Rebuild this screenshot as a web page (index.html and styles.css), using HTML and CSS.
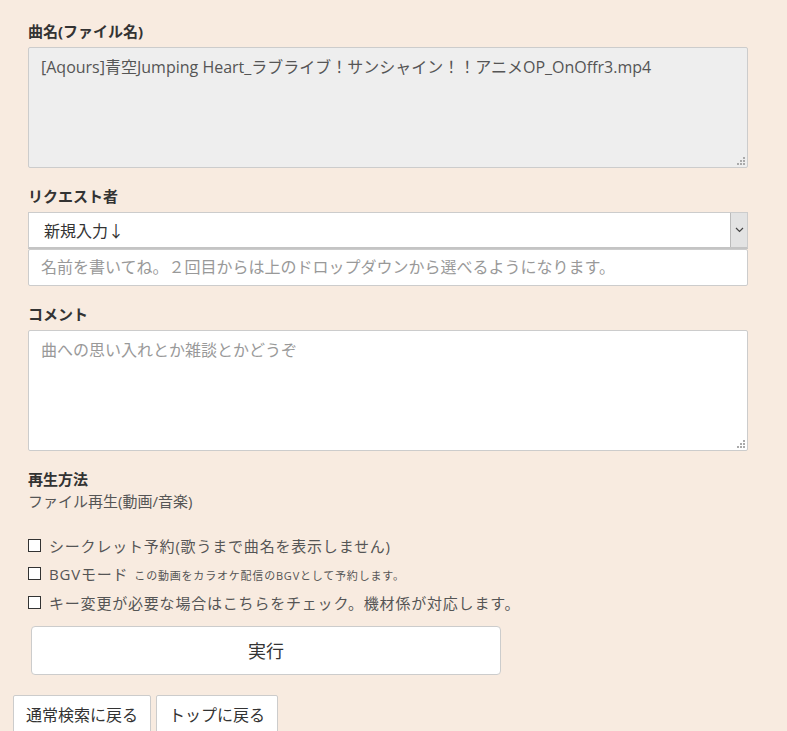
FILE: index.html
```html
<!DOCTYPE html>
<html lang="ja">
<head>
    <meta charset="UTF-8">
    <meta name="viewport" content="width=device-width, initial-scale=1.0">
    <title>リクエスト</title>
    <link rel="stylesheet" href="styles.css">
</head>
<body>
    <div class="page">
        <form class="request-form">
            <div class="group">
                <div class="label">曲名(ファイル名)</div>
                <div class="textbox readonly">[Aqours]青空Jumping Heart_ラブライブ！サンシャイン！！アニメOP_OnOffr3.mp4
                    <svg class="grip" width="9" height="9" viewBox="0 0 9 9"><g fill="#aaa"><rect x="7" y="1" width="2" height="2"/><rect x="4" y="4" width="2" height="2"/><rect x="7" y="4" width="2" height="2"/><rect x="1" y="7" width="2" height="2"/><rect x="4" y="7" width="2" height="2"/><rect x="7" y="7" width="2" height="2"/></g></svg>
                </div>
            </div>

            <div class="group">
                <div class="label">リクエスト者</div>
                <div class="select">
                    <span class="select-text">新規入力↓</span>
                    <span class="select-arrow">
                        <svg width="9" height="6" viewBox="0 0 9 6"><path d="M1 1 L4.5 4.5 L8 1" fill="none" stroke="#444" stroke-width="1.2"/></svg>
                    </span>
                </div>
                <div class="input placeholder">名前を書いてね。２回目からは上のドロップダウンから選べるようになります。</div>
            </div>

            <div class="group">
                <div class="label">コメント</div>
                <div class="textbox placeholder">曲への思い入れとか雑談とかどうぞ
                    <svg class="grip" width="9" height="9" viewBox="0 0 9 9"><g fill="#aaa"><rect x="7" y="1" width="2" height="2"/><rect x="4" y="4" width="2" height="2"/><rect x="7" y="4" width="2" height="2"/><rect x="1" y="7" width="2" height="2"/><rect x="4" y="7" width="2" height="2"/><rect x="7" y="7" width="2" height="2"/></g></svg>
                </div>
            </div>

            <div class="play-method">
                <div class="label">再生方法</div>
                <div class="plain">ファイル再生(動画/音楽)</div>
            </div>

            <div class="checks">
                <label class="check"><input type="checkbox"> シークレット予約(歌うまで曲名を表示しません)</label>
                <label class="check"><input type="checkbox"> BGVモード <small>この動画をカラオケ配信のBGVとして予約します。</small></label>
                <label class="check"><input type="checkbox"> キー変更が必要な場合はこちらをチェック。機材係が対応します。</label>
            </div>

            <button type="button" class="submit">実行</button>
        </form>

        <div class="nav-buttons">
            <button type="button" class="nav">通常検索に戻る</button>
            <button type="button" class="nav">トップに戻る</button>
        </div>
    </div>
</body>
</html>
```

FILE: styles.css
```css
body {
    background-color: #f8ebe0;
    color: #555;
    font-family: "Open Sans", "Noto Sans CJK JP", sans-serif;
    margin: 0;
}
.page {
    padding: 21px 13px 0;
}
.request-form {
    width: 720px;
    margin: 0 15px;
}
.group {
    margin-bottom: 18px;
}
.label {
    color: #333;
    font-size: 15px;
    font-weight: bold;
    line-height: 20px;
    margin-bottom: 6px;
}
.textbox {
    position: relative;
    box-sizing: border-box;
    height: 121px;
    background: white;
    border: 1px solid #ccc;
    border-radius: 2px;
    padding: 8px 12px;
    font-size: 16px;
    line-height: 22px;
    white-space: nowrap;
}
.textbox.readonly {
    background: #eee;
}
.grip {
    position: absolute;
    right: 2px;
    bottom: 2px;
}
.placeholder {
    color: #999;
}
.select {
    box-sizing: border-box;
    height: 37px;
    display: flex;
    align-items: stretch;
    background: white;
    border: 1px solid #ccc;
    border-bottom: 2px solid #c4c4c4;
}
.select-text {
    flex: 1;
    display: flex;
    align-items: center;
    padding-left: 15px;
    color: #333;
    font-size: 16px;
}
.select-arrow {
    width: 16px;
    display: flex;
    align-items: center;
    justify-content: center;
    background: #e3e3e3;
    border-left: 1px solid #bbb;
}
.input {
    box-sizing: border-box;
    height: 37px;
    background: white;
    border: 1px solid #ccc;
    border-radius: 2px;
    padding: 0 12px;
    font-size: 16px;
    line-height: 35px;
}
.play-method .label {
    margin-bottom: 2px;
}
.plain {
    font-size: 15px;
    line-height: 20px;
}
.checks {
    margin-top: 20px;
}
.check {
    display: flex;
    align-items: center;
    height: 28.5px;
    font-size: 15px;
    letter-spacing: 0.8px;
    white-space: nowrap;
}
.check input {
    appearance: none;
    width: 13px;
    height: 13px;
    margin: 0 8px 0 0;
    border: 1px solid #333;
    background: white;
}
.check small {
    font-size: 11px;
    letter-spacing: 0.8px;
    margin-left: 6px;
    margin-top: 3px;
}
.submit {
    display: block;
    box-sizing: border-box;
    width: 470px;
    height: 49px;
    margin: 9px 0 0 3px;
    background: white;
    border: 1px solid #ccc;
    border-radius: 4px;
    color: #333;
    font-family: inherit;
    font-size: 18px;
}
.nav-buttons {
    display: flex;
    gap: 5px;
    margin-top: 20px;
}
.nav {
    box-sizing: border-box;
    height: 38px;
    background: white;
    border: 1px solid #ccc;
    border-radius: 2px;
    padding: 0 12px;
    color: #333;
    font-family: inherit;
    font-size: 16px;
}
```
